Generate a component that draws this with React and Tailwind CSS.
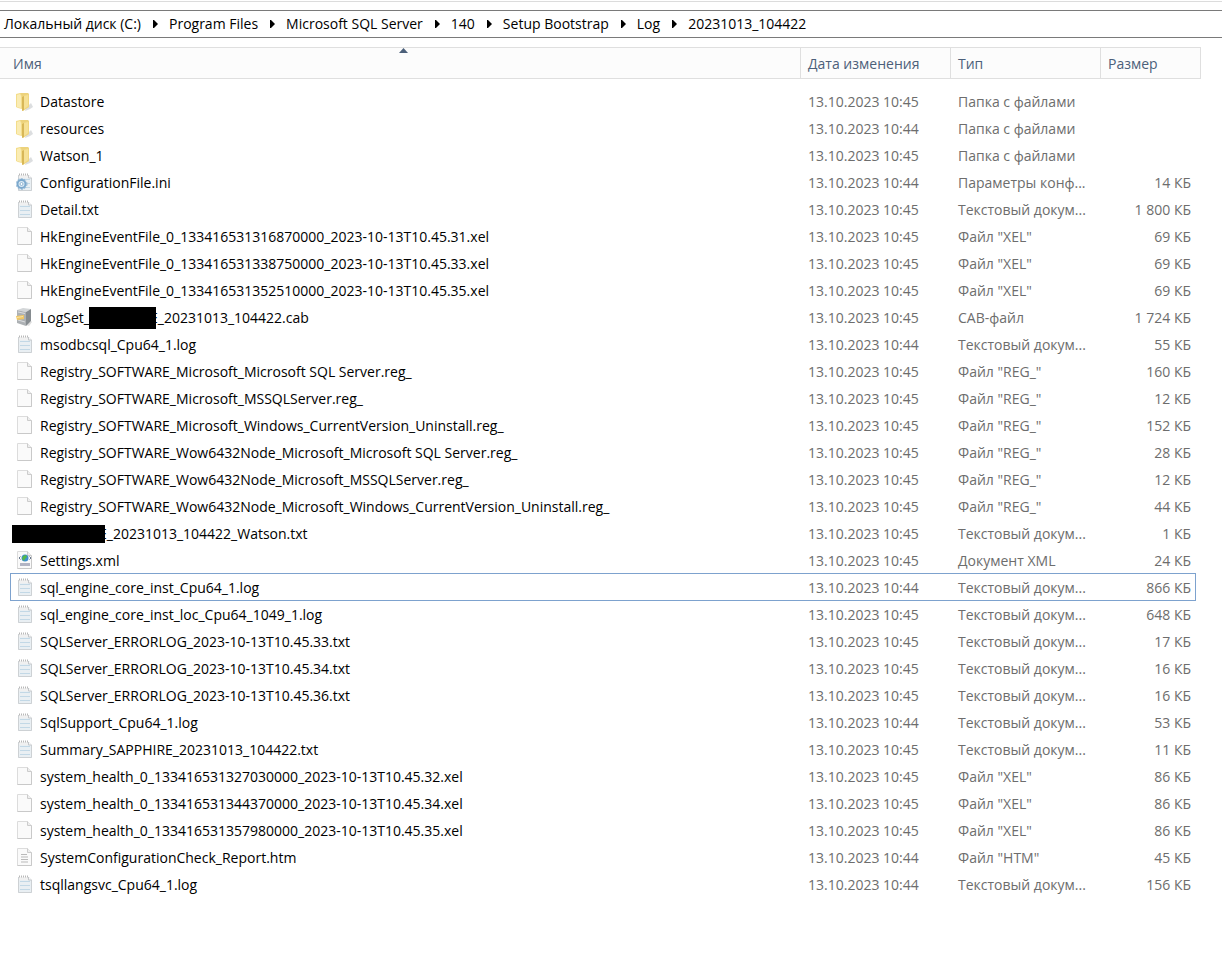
const files = [
  ["folder", "Datastore", "13.10.2023 10:45", "Папка с файлами", ""],
  ["folder", "resources", "13.10.2023 10:44", "Папка с файлами", ""],
  ["folder", "Watson_1", "13.10.2023 10:45", "Папка с файлами", ""],
  ["config", "ConfigurationFile.ini", "13.10.2023 10:44", "Параметры конф...", "14 КБ"],
  ["text", "Detail.txt", "13.10.2023 10:45", "Текстовый докум...", "1 800 КБ"],
  ["blank", "HkEngineEventFile_0_133416531316870000_2023-10-13T10.45.31.xel", "13.10.2023 10:45", 'Файл "XEL"', "69 КБ"],
  ["blank", "HkEngineEventFile_0_133416531338750000_2023-10-13T10.45.33.xel", "13.10.2023 10:45", 'Файл "XEL"', "69 КБ"],
  ["blank", "HkEngineEventFile_0_133416531352510000_2023-10-13T10.45.35.xel", "13.10.2023 10:45", 'Файл "XEL"', "69 КБ"],
  ["cab", "E_20231013_104422.cab", "13.10.2023 10:45", "CAB-файл", "1 724 КБ"],
  ["text", "msodbcsql_Cpu64_1.log", "13.10.2023 10:44", "Текстовый докум...", "55 КБ"],
  ["blank", "Registry_SOFTWARE_Microsoft_Microsoft SQL Server.reg_", "13.10.2023 10:45", 'Файл "REG_"', "160 КБ"],
  ["blank", "Registry_SOFTWARE_Microsoft_MSSQLServer.reg_", "13.10.2023 10:45", 'Файл "REG_"', "12 КБ"],
  ["blank", "Registry_SOFTWARE_Microsoft_Windows_CurrentVersion_Uninstall.reg_", "13.10.2023 10:45", 'Файл "REG_"', "152 КБ"],
  ["blank", "Registry_SOFTWARE_Wow6432Node_Microsoft_Microsoft SQL Server.reg_", "13.10.2023 10:45", 'Файл "REG_"', "28 КБ"],
  ["blank", "Registry_SOFTWARE_Wow6432Node_Microsoft_MSSQLServer.reg_", "13.10.2023 10:45", 'Файл "REG_"', "12 КБ"],
  ["blank", "Registry_SOFTWARE_Wow6432Node_Microsoft_Windows_CurrentVersion_Uninstall.reg_", "13.10.2023 10:45", 'Файл "REG_"', "44 КБ"],
  ["hidden", "E_20231013_104422_Watson.txt", "13.10.2023 10:45", "Текстовый докум...", "1 КБ"],
  ["xml", "Settings.xml", "13.10.2023 10:45", "Документ XML", "24 КБ"],
  ["text", "sql_engine_core_inst_Cpu64_1.log", "13.10.2023 10:44", "Текстовый докум...", "866 КБ"],
  ["text", "sql_engine_core_inst_loc_Cpu64_1049_1.log", "13.10.2023 10:45", "Текстовый докум...", "648 КБ"],
  ["text", "SQLServer_ERRORLOG_2023-10-13T10.45.33.txt", "13.10.2023 10:45", "Текстовый докум...", "17 КБ"],
  ["text", "SQLServer_ERRORLOG_2023-10-13T10.45.34.txt", "13.10.2023 10:45", "Текстовый докум...", "16 КБ"],
  ["text", "SQLServer_ERRORLOG_2023-10-13T10.45.36.txt", "13.10.2023 10:45", "Текстовый докум...", "16 КБ"],
  ["text", "SqlSupport_Cpu64_1.log", "13.10.2023 10:44", "Текстовый докум...", "53 КБ"],
  ["text", "Summary_SAPPHIRE_20231013_104422.txt", "13.10.2023 10:45", "Текстовый докум...", "11 КБ"],
  ["blank", "system_health_0_133416531327030000_2023-10-13T10.45.32.xel", "13.10.2023 10:45", 'Файл "XEL"', "86 КБ"],
  ["blank", "system_health_0_133416531344370000_2023-10-13T10.45.34.xel", "13.10.2023 10:45", 'Файл "XEL"', "86 КБ"],
  ["blank", "system_health_0_133416531357980000_2023-10-13T10.45.35.xel", "13.10.2023 10:45", 'Файл "XEL"', "86 КБ"],
  ["htm", "SystemConfigurationCheck_Report.htm", "13.10.2023 10:44", 'Файл "HTM"', "45 КБ"],
  ["text", "tsqllangsvc_Cpu64_1.log", "13.10.2023 10:44", "Текстовый докум...", "156 КБ"],
];

const path = [
  "Локальный диск (C:)",
  "Program Files",
  "Microsoft SQL Server",
  "140",
  "Setup Bootstrap",
  "Log",
  "20231013_104422",
];

const focused = "sql_engine_core_inst_Cpu64_1.log";

function Page() {
  return (
    <>
      <path d="M1.5 .5h10l4 4v13h-14z" fill="#fafafa" stroke="#dcdcdc" />
      <path d="M1.500 17.500h14v-13" fill="none" stroke="#c9c9c9" />
      <path d="M11.500 .5v4h4" fill="#eeeeee" stroke="#cccccc" />
    </>
  );
}

function Notepad() {
  return (
    <>
      <path d="M2 2h11l3 3v13H2z" fill="#e9eff3" />
      <path d="M2 2h11l3 3H2z" fill="#f0f0f0" />
      <path d="M2.500 2v15.500h13V5" fill="none" stroke="#cdd1d4" />
      <path d="M3 1.500h10" stroke="#b9b9b9" strokeWidth="2" strokeDasharray="1 1" />
      <path d="M12.500 2v3h3" fill="#f7f7f7" stroke="#c4c7ca" />
      <path d="M4 6.500h10M4 10.500h10M4 14.500h10" stroke="#c2d8e6" />
    </>
  );
}

function FileIcon({ kind }) {
  return (
    <svg viewBox="0 0 18 20" className="h-5 w-[18px] shrink-0" aria-hidden="true">
      {kind === "folder" && (
        <>
          <path d="M10 16l5-5 2 4-3 2-5 2z" fill="#c5c8cc" opacity=".6" />
          <path d="M4 1l8 0 1 1v13l-6 2z" fill="#ecd27c" />
          <path d="M0 2l4-1 2 3v13l-4-1-2-1z" fill="#f3dd8b" />
          <path d="M1 3l3-1 1 2v12l-4-1z" fill="#faecb4" />
          <path d="M6 4l6-2 1 1v12l-6 4-1-1z" fill="#f0d680" />
          <path d="M6 5l2-1v14l-2 1z" fill="#d8b757" />
          <path d="M8 4l4-1v11l-4 3z" fill="#f6e196" />
        </>
      )}
      {kind === "blank" && <Page />}
      {kind === "text" && <Notepad />}
      {kind === "config" && (
        <>
          <Notepad />
          <circle cx="5.500" cy="11" r="5.500" fill="none" stroke="#94b7d4" strokeDasharray="2 1.500" />
          <circle cx="5.500" cy="11" r="4" fill="#dcebf6" stroke="#7ba8cd" strokeWidth="2" />
          <circle cx="5.500" cy="11" r="1.500" fill="#fff" stroke="#8fb3d1" />
        </>
      )}
      {kind === "htm" && (
        <>
          <Page />
          <path d="M5 6.500h6M5 9h7M5 11.500h7M5 14h7" stroke="#b9b9b9" />
        </>
      )}
      {kind === "xml" && (
        <>
          <Page />
          <circle cx="9" cy="7" r="3.500" fill="#3f8fd0" />
          <path d="M7 5l3-1 1 2-2 2-1 2-2-2z" fill="#54b848" />
          <path d="M4.500 5.500L3 7l1.500 1.500M13.500 5.500L15 7l-1.500 1.500" fill="none" stroke="#69788c" />
          <path d="M4 12h10v3H4z" fill="#b3b5c4" />
        </>
      )}
      {kind === "cab" && (
        <>
          <path d="M10 17l5-4 1 1-3 4z" fill="#cfcfcf" opacity=".7" />
          <path d="M1 2l6-2 8 1-5 3z" fill="#d3d6d8" />
          <path d="M1 2l9 2v14l-9-3z" fill="#adb1b4" />
          <path d="M10 4l5-3v12l-5 5z" fill="#868c90" />
          <path d="M2 4l7 1.500M2 12l7 2" stroke="#dcdee0" />
          <path d="M0 8l8-1v4l-7 1z" fill="#efc665" />
          <path d="M1 9l6-1v1L1 10z" fill="#f9e3a4" />
        </>
      )}
    </svg>
  );
}

function FileName({ kind, name }) {
  if (kind === "hidden") {
    return (
      <a href="#" className="flex items-center pl-3">
        <span className="relative -mr-1.5 h-[18px] w-[93px] bg-black" />
        {name}
      </a>
    );
  }
  return (
    <a href="#" className="flex items-center gap-1.5 pl-4">
      <FileIcon kind={kind} />
      {kind === "cab" ? (
        <span className="flex items-center">
          LogSet_
          <span className="relative -mr-1.5 -ml-px h-[22px] w-[67px] bg-black" />
          {name}
        </span>
      ) : (
        name
      )}
    </a>
  );
}

export default function App() {
  return (
    <div className="min-h-screen bg-white font-['Open_Sans','Noto_Sans',sans-serif] text-sm text-black">
      <div className="h-2.5 pt-px">
        <div className="border-t border-[#dcdcdc]" />
      </div>
      <nav className="flex h-7 items-center gap-3 border-y border-[#7a7a7a] pl-1">
        {path.map((item, i) => (
          <a key={item} href="#" className="flex items-center gap-[11px] whitespace-nowrap">
            {i > 0 && (
              <svg viewBox="0 0 5 8" className="h-2 w-[5px]" aria-hidden="true">
                <path d="M0 0h1l4 4-4 4H0z" />
              </svg>
            )}
            {item}
          </a>
        ))}
      </nav>
      <main className="pt-[9px] pr-[21px]">
        <table className="w-full table-fixed border-separate border-spacing-0">
          <thead>
            <tr className="h-8 text-left text-[#4c607a] *:border-y *:border-r *:border-[#dfdfdf] *:bg-[#fcfcfc] *:px-0 *:pt-0.5 *:pb-0 *:font-normal">
              <th className="relative">
                <button className="pl-[13px]">Имя</button>
                <svg viewBox="0 0 9 5" className="absolute top-0 left-1/2 -ml-px h-[5px] w-[9px]" aria-hidden="true">
                  <path d="M4.500 0L9 5H0z" fill="#4c607a" />
                </svg>
              </th>
              <th className="w-[150px]">
                <button className="pl-[7px]">Дата изменения</button>
              </th>
              <th className="w-[150px]">
                <button className="pl-[7px]">Тип</button>
              </th>
              <th className="w-[100px]">
                <button className="pl-[7px]">Размер</button>
              </th>
            </tr>
          </thead>
          <tbody className="before:block before:h-[9px] before:content-['']">
            {files.map(([kind, name, date, type, size]) => (
              <tr key={name} className="relative h-[27px] text-[#6d6d6d] *:p-0">
                <td className="text-black">
                  <FileName kind={kind} name={name} />
                  {name === focused && (
                    <span className="pointer-events-none absolute -top-px right-[5px] bottom-0 left-2.5 border border-[#7da2ce]" />
                  )}
                </td>
                <td>
                  <span className="pl-[7px]">{date}</span>
                </td>
                <td>
                  <span className="pl-[7px] whitespace-nowrap">{type}</span>
                </td>
                <td className="text-right">
                  <span className="pr-2.5">{size}</span>
                </td>
              </tr>
            ))}
          </tbody>
        </table>
      </main>
    </div>
  );
}
